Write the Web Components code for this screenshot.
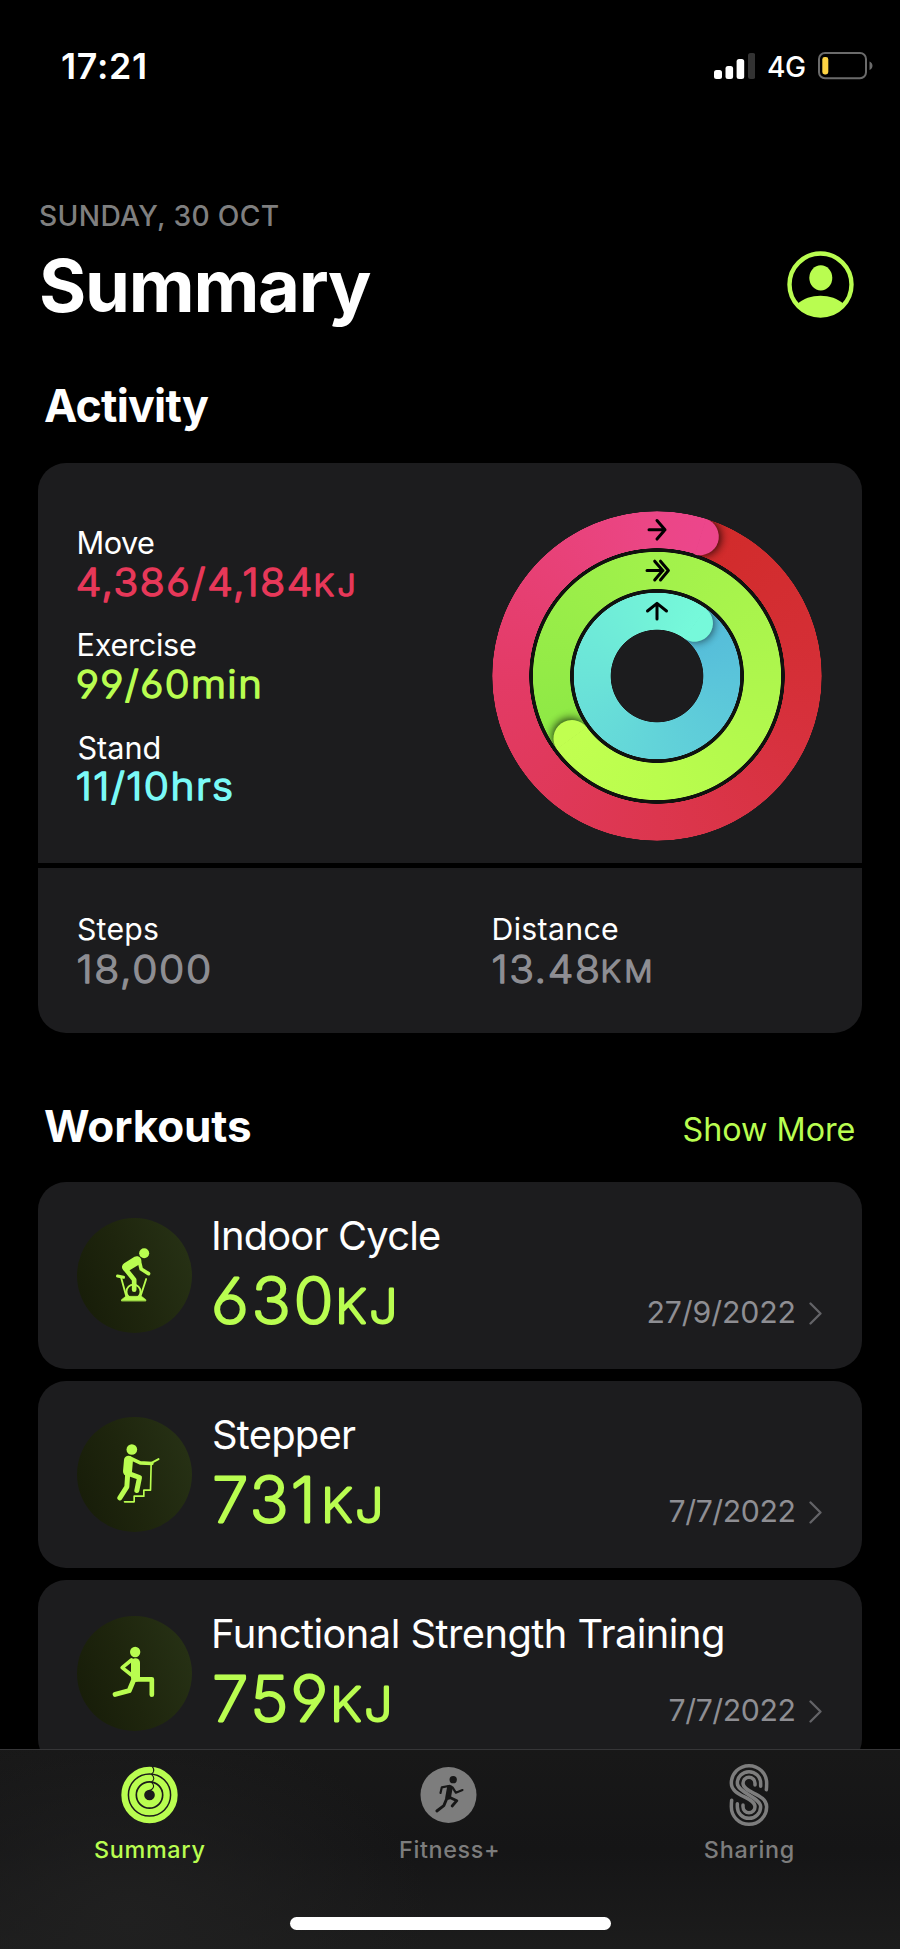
<!DOCTYPE html>
<html lang="en">
<head>
<meta charset="utf-8">
<title>Fitness Summary</title>
<style>
html, body { margin: 0; background: #000; }
body { font-family: Inter, "Liberation Sans", sans-serif; color: #fff; width: 900px; height: 1949px; overflow: hidden; }
</style>
</head>
<body>
<fitness-app></fitness-app>

<script>
const FAMILY = 'Inter, "Liberation Sans", sans-serif';
const CAP = 0.727;
const pen = document.createElement('canvas').getContext('2d');

function metrics(text, size, weight) {
  pen.font = `${weight} ${size}px ${FAMILY}`;
  const m = pen.measureText(text);
  return { left: m.actualBoundingBoxLeft, ink: m.actualBoundingBoxLeft + m.actualBoundingBoxRight, advance: m.width };
}

/* A line of text whose box is its capital height by its drawn width. */
class CapText extends HTMLElement {
  connectedCallback() {
    if (this.shadowRoot) return;
    const cap = +this.getAttribute('cap'), w = +this.getAttribute('w');
    const weight = this.getAttribute('weight') || 400;
    const size = cap / CAP, text = this.textContent;
    this.attachShadow({ mode: 'open' }).innerHTML = `<style>
      :host{display:block;flex:none;width:${w}px;height:${cap}px;line-height:${cap}px;white-space:nowrap}
      span{display:inline-block;font-family:${FAMILY};font-size:${size}px;font-weight:${weight};line-height:${cap}px;vertical-align:top}
    </style><span><slot></slot></span>`;
    const m = metrics(text, size, weight), s = this.shadowRoot.querySelector('span');
    s.style.letterSpacing = (w - m.ink) / (text.length - 1) + 'px';
    s.style.marginLeft = m.left + 'px';
  }
}
customElements.define('cap-text', CapText);

/* Numerals with rounded stroke ends, set to a given width: half by tracking, half by glyph width. */
class RoundText extends HTMLElement {
  connectedCallback() {
    if (this.shadowRoot) return;
    const cap = +this.getAttribute('cap'), w = +this.getAttribute('w'), pad = +this.getAttribute('pen');
    const weight = this.getAttribute('weight') || 300, text = this.getAttribute('text');
    const size = (cap - pad) / CAP;
    this.attachShadow({ mode: 'open' }).innerHTML = `<style>
      :host{display:block;flex:none;width:${w}px;height:${cap}px}
      svg{display:block;overflow:visible}
      text{font-family:${FAMILY};font-size:${size}px;font-weight:${weight};font-feature-settings:"cv03","cv04";
        fill:currentColor;stroke:currentColor;stroke-width:${pad}px;stroke-linejoin:round;stroke-linecap:round}
    </style><svg width="${w}" height="${cap}"><text y="${cap - pad / 2}">${text}</text></svg>`;
    const m = metrics(text, size, weight), t = this.shadowRoot.querySelector('text');
    const ink = m.ink + t.getComputedTextLength() - m.advance;
    const gaps = text.length - 1, track = 0.5 * (w - pad - ink) / gaps;
    t.style.letterSpacing = track + 'px';
    const k = (w - pad) / (ink + track * gaps);
    const advance = t.getComputedTextLength();
    t.setAttribute('lengthAdjust', 'spacingAndGlyphs');
    t.setAttribute('textLength', advance * k);
    t.setAttribute('x', m.left * k + pad / 2);
  }
}
customElements.define('round-text', RoundText);

function element(name, html) {
  const tpl = document.createElement('template');
  tpl.innerHTML = html;
  customElements.define(name, class extends HTMLElement {
    connectedCallback() {
      if (!this.shadowRoot) this.attachShadow({ mode: 'open' }).append(tpl.content.cloneNode(true));
    }
  });
}

element('status-bar', `<style>
  :host{display:flex;height:105px;box-sizing:border-box;padding:53px 26px 0 62px;justify-content:space-between;align-items:flex-start}
  .r{display:flex}
  .r cap-text{margin:3.5px 13px 0}
</style>
<cap-text cap="26" w="83" weight="600">17:21</cap-text>
<div class="r">
  <svg width="41" height="27" viewBox="714 53 41 27" fill="#fff"><rect x="714" y="70" width="8" height="9" rx="2.5"/><rect x="725.5" y="66" width="7.6" height="13" rx="2.5"/><rect x="736.6" y="59" width="7.6" height="20" rx="2.5"/><rect x="748" y="53" width="7.4" height="26" rx="2.5" fill="#333"/></svg>
  <cap-text cap="20.5" w="37" weight="450">4G</cap-text>
  <svg width="56" height="28" viewBox="818 52 56 28" style="margin-top:-1px"><rect x="819" y="53" width="47" height="25.2" rx="6" fill="none" stroke="#6b6b6b" stroke-width="2"/><rect x="822.3" y="57" width="6" height="17.4" rx="2.4" fill="#fdd443"/><path d="M869.5 61.5c4 1.500 4 7 0 8.500z" fill="#6b6b6b"/></svg>
</div>`);

element('page-header', `<style>
  :host{display:flex;justify-content:space-between;align-items:flex-start;margin:100.500px 46px 0 40px}
  .date{color:#7f7f7f}
  .big{margin:33.500px 0 0 1px}
  svg{margin-top:45px}
</style>
<div><cap-text class="date" cap="20.5" w="239" weight="500">SUNDAY, 30 OCT</cap-text>
<cap-text class="big" cap="52.5" w="330" weight="700">Summary</cap-text></div>
<svg width="67" height="67" viewBox="-33.5 -33.5 67 67"><circle r="31" fill="none" stroke="#b9fd50" stroke-width="4.4"/><ellipse cx=".3" cy="-6.700" rx="11.500" ry="12.600" fill="#b9fd50"/><path d="M-23 19.500C-12 8.500 12 8.500 23 19.500A31 31 0 0 1-23 19.500Z" fill="#b9fd50"/></svg>`);

element('activity-rings', `<style>
  :host{display:grid;width:330px;height:330px;flex:none}
  :host>*,.disc,svg{grid-area:1/1;width:330px;height:330px}
  svg{z-index:1}
  .disc{border-radius:50%;box-sizing:border-box}
  .a{background:conic-gradient(from 17.400deg,#d12b2a,#d52f37 20%,#dc364e 45%,#e33b66 70%,#eb4685 94%,#ec468b);
     mask:radial-gradient(circle,#0000 127px,#000 127.700px,#000 164.300px,#0000 165px)}
  .gap{background:#10120f;mask:radial-gradient(circle,#0000 83px,#000 84px,#000 127.500px,#0000 128px)}
  .b{background:conic-gradient(from 234deg,#8de845,#96ec48 15%,#a1f14b 34%,#aef64d 60%,#bafd4d 85%,#c1ff50);
     mask:radial-gradient(circle,#0000 86.600px,#000 87.300px,#000 123.700px,#0000 124.400px)}
  .c{background:conic-gradient(from 36deg,#54bad9,#5ac4da 15%,#62d3d9 40%,#6be4d8 65%,#73f3d8 90%,#76f9da);
     mask:radial-gradient(circle,#0000 46px,#000 46.700px,#000 82.900px,#0000 83.500px)}
</style>
<div class="disc a"></div><div class="disc gap"></div><div class="disc b"></div><div class="disc c"></div>
<svg viewBox="-165 -165 330 330">
  <defs>
    <filter id="s" x="-60%" y="-60%" width="220%" height="220%"><feGaussianBlur stdDeviation="4"/></filter>
    <clipPath id="k1"><path d="M0-164.700A164.700 164.700 0 0 1 164.700 0H127.300A127.300 127.300 0 0 0 0-127.300Z"/></clipPath>
    <clipPath id="k2"><path d="M0-124A124 124 0 0 1 124 0H87A87 87 0 0 0 0-87Z"/></clipPath>
    <clipPath id="k3"><path d="M0-83.200A83.200 83.200 0 0 1 83.200 0H46.400A46.400 46.400 0 0 0 0-46.400Z"/></clipPath>
  </defs>
  <g transform="rotate(17.4)"><g clip-path="url(#k1)"><circle cx="2" cy="-146" r="18.500" opacity=".75" filter="url(#s)"/></g><path d="M-.5-164.600A18.650 18.650 0 0 1-.5-127.300Z" fill="#ec468b"/></g>
  <g transform="rotate(234)"><g clip-path="url(#k2)"><circle cx="2" cy="-105.500" r="18" opacity=".75" filter="url(#s)"/></g><path d="M-.5-124A18.500 18.500 0 0 1-.5-87Z" fill="#c1ff50"/></g>
  <g transform="rotate(36)"><g clip-path="url(#k3)"><circle cx="1" cy="-64.800" r="18" opacity=".6" filter="url(#s)"/></g><path d="M-.5-83.100A18.350 18.350 0 0 1-.5-46.400Z" fill="#76f9da"/></g>
  <g fill="none" stroke="#000" stroke-width="3" stroke-linecap="round" stroke-linejoin="round">
    <path d="M-8-146.200H8M0-155.500L8-146.200L0-136.900M-10-105.500H6M-2.300-114.800L5.700-105.500L-2.300-96M3.500-114.800L11.400-105.500L3.500-96M0-57V-72.300M-9.500-65L0-72.600L9.500-65"/>
  </g>
</svg>`);

element('activity-card', `<style>
  :host{display:flex;flex-direction:column;gap:5px;margin:40.500px 38.400px 0;border-radius:28px;overflow:hidden}
  .top,.bottom{background:#1c1c1e;box-sizing:border-box}
  .top{height:400px;padding:48px 39.200px 0 39.100px;display:flex;justify-content:space-between}
  .bottom{height:165px;padding:50px 39px 0 39.600px;display:grid;grid-template-columns:415.500px 1fr}
  .v{display:flex;align-items:flex-end}
  .stats{padding-top:21px}
  .stats>cap-text{margin-left:1px}
  .stats .v{margin:13.300px 0 37.500px}
  .bottom .v{margin-top:13.500px;color:#8e8e93}
</style>
<div class="top">
  <div class="stats">
    <cap-text cap="22.3" w="75.5">Move</cap-text>
    <div class="v" style="color:#e73859"><round-text cap="29.2" pen="1.5" w="234" text="4,386/4,184"></round-text><round-text cap="22.7" pen="1.5" w="38.500" text="KJ" style="margin-left:3.500px"></round-text></div>
    <cap-text cap="22.3" w="117.5">Exercise</cap-text>
    <div class="v" style="color:#b9fd50"><round-text cap="29.2" pen="1.5" w="183" text="99/60min"></round-text></div>
    <cap-text cap="22.3" w="81">Stand</cap-text>
    <div class="v" style="color:#7afaf7"><round-text cap="29.2" pen="1.5" w="155" text="11/10hrs"></round-text></div>
  </div>
  <activity-rings></activity-rings>
</div>
<div class="bottom">
  <div><cap-text cap="22" w="80">Steps</cap-text><div class="v"><round-text cap="29.2" pen="1.300" w="132" text="18,000"></round-text></div></div>
  <div><cap-text cap="22" w="124.5">Distance</cap-text><div class="v"><round-text cap="29.2" pen="1.300" w="105" text="13.48"></round-text><round-text cap="22.7" pen="1.3" w="48.500" text="KM" style="margin-left:3.500px"></round-text></div></div>
</div>`);

const ICONS = {
  cycle: `<circle cx="252" cy="159" r="15" fill="#b9fd50" stroke="none"/>
    <path d="M230 181L199 200" stroke-width="27"/><path d="M237 181L243 206L265 220" stroke-width="11"/>
    <path d="M196 206L222 238V268" stroke-width="14"/><path d="M172 227L190 231" stroke-width="9"/>
    <path d="M183 232L198 287M258 236L241 288" stroke-width="5.500"/><circle cx="220" cy="274" r="21" stroke-width="5.500"/>
    <path d="M184 301V298L197 288H244L257 298V301Z" fill="#b9fd50" stroke-width="2"/>`,
  stepper: `<circle cx="215" cy="148" r="16" fill="#b9fd50" stroke="none"/>
    <path d="M205 180L202 214" stroke-width="27"/><path d="M210 174L240 188L275 190" stroke-width="11"/>
    <path d="M274 188L295 177" stroke-width="6"/><path d="M273 190L271 270H251V288H222V305H193" stroke-width="5"/>
    <path d="M200 218L238 232L230 271" stroke-width="15"/><path d="M203 214L200 260L179 293" stroke-width="15"/>`,
  lunge: `<circle cx="225" cy="156" r="15.500" fill="#b9fd50" stroke="none"/>
    <path d="M226 188V232" stroke-width="27"/><path d="M214 180L186 203L214 225" stroke-width="11"/>
    <path d="M224 238H275V284" stroke-width="14"/><path d="M222 236L207 272L165 283" stroke-width="15"/>`
};
class SportIcon extends HTMLElement {
  connectedCallback() {
    if (this.shadowRoot) return;
    this.attachShadow({ mode: 'open' }).innerHTML = `<style>
      :host{display:block;flex:none;width:115px;height:115px;border-radius:50%;background:linear-gradient(70deg,#161b08,#1e250d 45%,#283316)}
      svg{display:block}</style>
      <svg width="115" height="115" viewBox="50.5 53 345 345" fill="none" stroke="#b9fd50" stroke-linecap="round" stroke-linejoin="round"><g transform="translate(0 ${this.getAttribute('dy') || 0})">${ICONS[this.getAttribute('name')]}</g></svg>`;
  }
}
customElements.define('sport-icon', SportIcon);

element('workout-card', `<style>
  :host{display:flex;box-sizing:border-box;height:187px;padding:35.500px 39.600px 0 38.600px;background:#1c1c1e;border-radius:28px;flex:none}
  .mid{margin:3.500px 0 0 22px;flex:1;min-width:0}
  .end{display:flex;align-items:center;gap:14.500px;height:22px;margin-top:83.500px;color:#8e8e93}
  .end svg{margin-top:3px}
  .value{margin-top:25.500px;display:block}
</style>
<slot name="icon"></slot>
<div class="mid"><slot name="title"></slot><div class="value"><slot></slot></div></div>
<div class="end"><slot name="date"></slot><svg width="13" height="23" viewBox="0 0 13 23" fill="none" stroke="#636367" stroke-width="2.300" stroke-linecap="round" stroke-linejoin="round"><path d="M1.500 1.500L11.500 11.500L1.500 21.500"/></svg></div>`);

element('energy-value', `<style>:host{display:flex;align-items:flex-end;color:#b9fd50}</style><slot></slot>`);

element('workout-list', `<style>
  :host{display:block;margin:76.500px 38.400px 0}
  .head{display:flex;justify-content:space-between;align-items:flex-end;padding:0 7px 0 6.600px;margin-bottom:40.500px}
  .more{color:#b9fd50}
  .list{display:flex;flex-direction:column;gap:12.200px}
</style>
<div class="head"><cap-text cap="32" w="206" weight="650">Workouts</cap-text><cap-text class="more" cap="23.5" w="171">Show More</cap-text></div>
<div class="list">
  <workout-card><sport-icon slot="icon" name="cycle"></sport-icon><cap-text slot="title" cap="29" w="226">Indoor Cycle</cap-text>
    <energy-value><round-text cap="48" pen="2.8" weight="200" w="117" text="630"></round-text><round-text cap="37" pen="2.8" weight="200" w="57" text="KJ" style="margin-left:7px"></round-text></energy-value><cap-text slot="date" cap="22" w="146">27/9/2022</cap-text></workout-card>
  <workout-card><sport-icon slot="icon" name="stepper" dy="2.500"></sport-icon><cap-text slot="title" cap="29" w="142">Stepper</cap-text>
    <energy-value><round-text cap="48" pen="2.8" weight="200" w="97" text="731"></round-text><round-text cap="37" pen="2.8" weight="200" w="57" text="KJ" style="margin-left:13px"></round-text></energy-value><cap-text slot="date" cap="22" w="125">7/7/2022</cap-text></workout-card>
  <workout-card><sport-icon slot="icon" name="lunge" dy="5"></sport-icon><cap-text slot="title" cap="29" w="509">Functional Strength Training</cap-text>
    <energy-value><round-text cap="48" pen="2.8" weight="200" w="112" text="759"></round-text><round-text cap="37" pen="2.8" weight="200" w="57" text="KJ" style="margin-left:7px"></round-text></energy-value><cap-text slot="date" cap="22" w="125">7/7/2022</cap-text></workout-card>
</div>`);

element('tab-bar', `<style>
  :host{display:block;height:200px;box-sizing:border-box;border-top:1px solid #363638;background:radial-gradient(ellipse 300px 200px at 130px 170px,#202020,#20202000),linear-gradient(#181818,#151516 50%,#1c1c1c)}
  .tabs{display:grid;grid-template-columns:repeat(3,1fr);height:167px;width:898px}
  .tab{display:flex;flex-direction:column;align-items:center;color:#7d7d7d}
  .tab svg{height:64px;margin:13px 0 14px}
  .on{color:#b9fd50}
  .home{width:321px;height:12.600px;border-radius:7px;background:#fff;margin:0 auto}
</style>
<div class="tabs">
  <div class="tab on"><svg width="57" viewBox="93.5 68 171 192" fill="none" stroke="currentColor">
    <circle cx="179" cy="164" r="75" stroke-width="19"/><circle cx="179" cy="164" r="51.500" stroke-width="19"/><circle cx="179" cy="164" r="26.500" stroke-width="21"/>
    <g stroke="#181818" stroke-width="3.200"><path d="M187 79Q194 86 191 94Q189 98 185 101"/><path d="M185 102Q194 109 191 118Q189 122 185 125"/><path d="M185 126Q194 134 190 142Q187 148 178 151"/></g></svg>
    <cap-text cap="17" w="109.500" weight="500">Summary</cap-text></div>
  <div class="tab"><svg width="57" viewBox="990.5 68 171 192" fill="none" stroke="#171717" stroke-linecap="round" stroke-linejoin="round">
    <circle cx="1076" cy="164" r="84" fill="#7d7d7d" stroke="none"/><circle cx="1090" cy="118" r="11" fill="#171717" stroke="none"/>
    <path d="M1080 142L1075 170" stroke-width="17"/><path d="M1076 137L1056 141L1052 158M1088 141L1098 157L1118 149" stroke-width="6.500"/>
    <path d="M1077 170L1101 181L1087 197M1072 172L1062 196L1041 212" stroke-width="8.500"/></svg>
    <cap-text cap="17" w="98" weight="500">Fitness+</cap-text></div>
  <div class="tab"><svg width="40" viewBox="148 68 120 192" fill="none" stroke="currentColor" stroke-width="10.500" stroke-linecap="round" style="transform:translateX(1px)">
    <path d="M260 148Q261 140 261 129A53 53 0 0 0 155 129C155 168 226 170 226 199A18 18 0 0 1 190 199V194"/>
    <path d="M243 138V129A35 35 0 0 0 173 129C173 156 243 172 243 199A35 35 0 0 1 173 199V190"/>
    <path d="M226 134V129A18 18 0 0 0 190 129C190 158 261 160 261 199A53 53 0 0 1 155 199Q155 188 156 180"/></svg>
    <cap-text cap="17" w="88" weight="500" style="transform:translateX(.5px)">Sharing</cap-text></div>
</div>
<div class="home"></div>`);

element('fitness-app', `<style>
  :host{display:flex;flex-direction:column;width:900px;height:1949px;overflow:hidden;background:#000}
  main{height:1749px;overflow:hidden;flex:none}
</style>
<main>
  <status-bar></status-bar>
  <page-header></page-header>
  <cap-text cap="32.5" w="164" weight="650" style="margin:72.500px 0 0 45px">Activity</cap-text>
  <activity-card></activity-card>
  <workout-list></workout-list>
</main>
<tab-bar></tab-bar>`);
</script>
</body>
</html>
